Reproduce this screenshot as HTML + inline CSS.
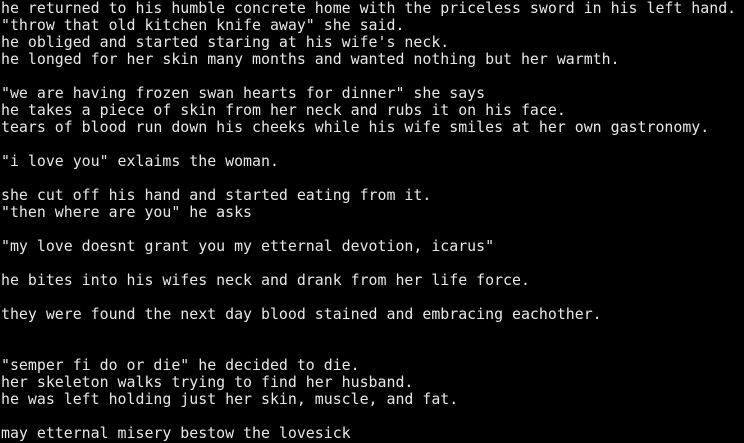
<!DOCTYPE html>
<html><head><meta charset="utf-8"><style>
html,body{margin:0;padding:0;background:#000;width:744px;height:443px;overflow:hidden}
pre{margin:0;position:absolute;left:1px;top:0px;font-family:"DejaVu Sans Mono","Liberation Mono",monospace;font-size:14.9px;line-height:17px;color:#e8e8e8;white-space:pre}
</style></head><body><pre>he returned to his humble concrete home with the priceless sword in his left hand.
"throw that old kitchen knife away" she said.
he obliged and started staring at his wife's neck.
he longed for her skin many months and wanted nothing but her warmth.

"we are having frozen swan hearts for dinner" she says
he takes a piece of skin from her neck and rubs it on his face.
tears of blood run down his cheeks while his wife smiles at her own gastronomy.

"i love you" exlaims the woman.

she cut off his hand and started eating from it.
"then where are you" he asks

"my love doesnt grant you my etternal devotion, icarus"

he bites into his wifes neck and drank from her life force.

they were found the next day blood stained and embracing eachother.


"semper fi do or die" he decided to die.
her skeleton walks trying to find her husband.
he was left holding just her skin, muscle, and fat.

may etternal misery bestow the lovesick</pre></body></html>
